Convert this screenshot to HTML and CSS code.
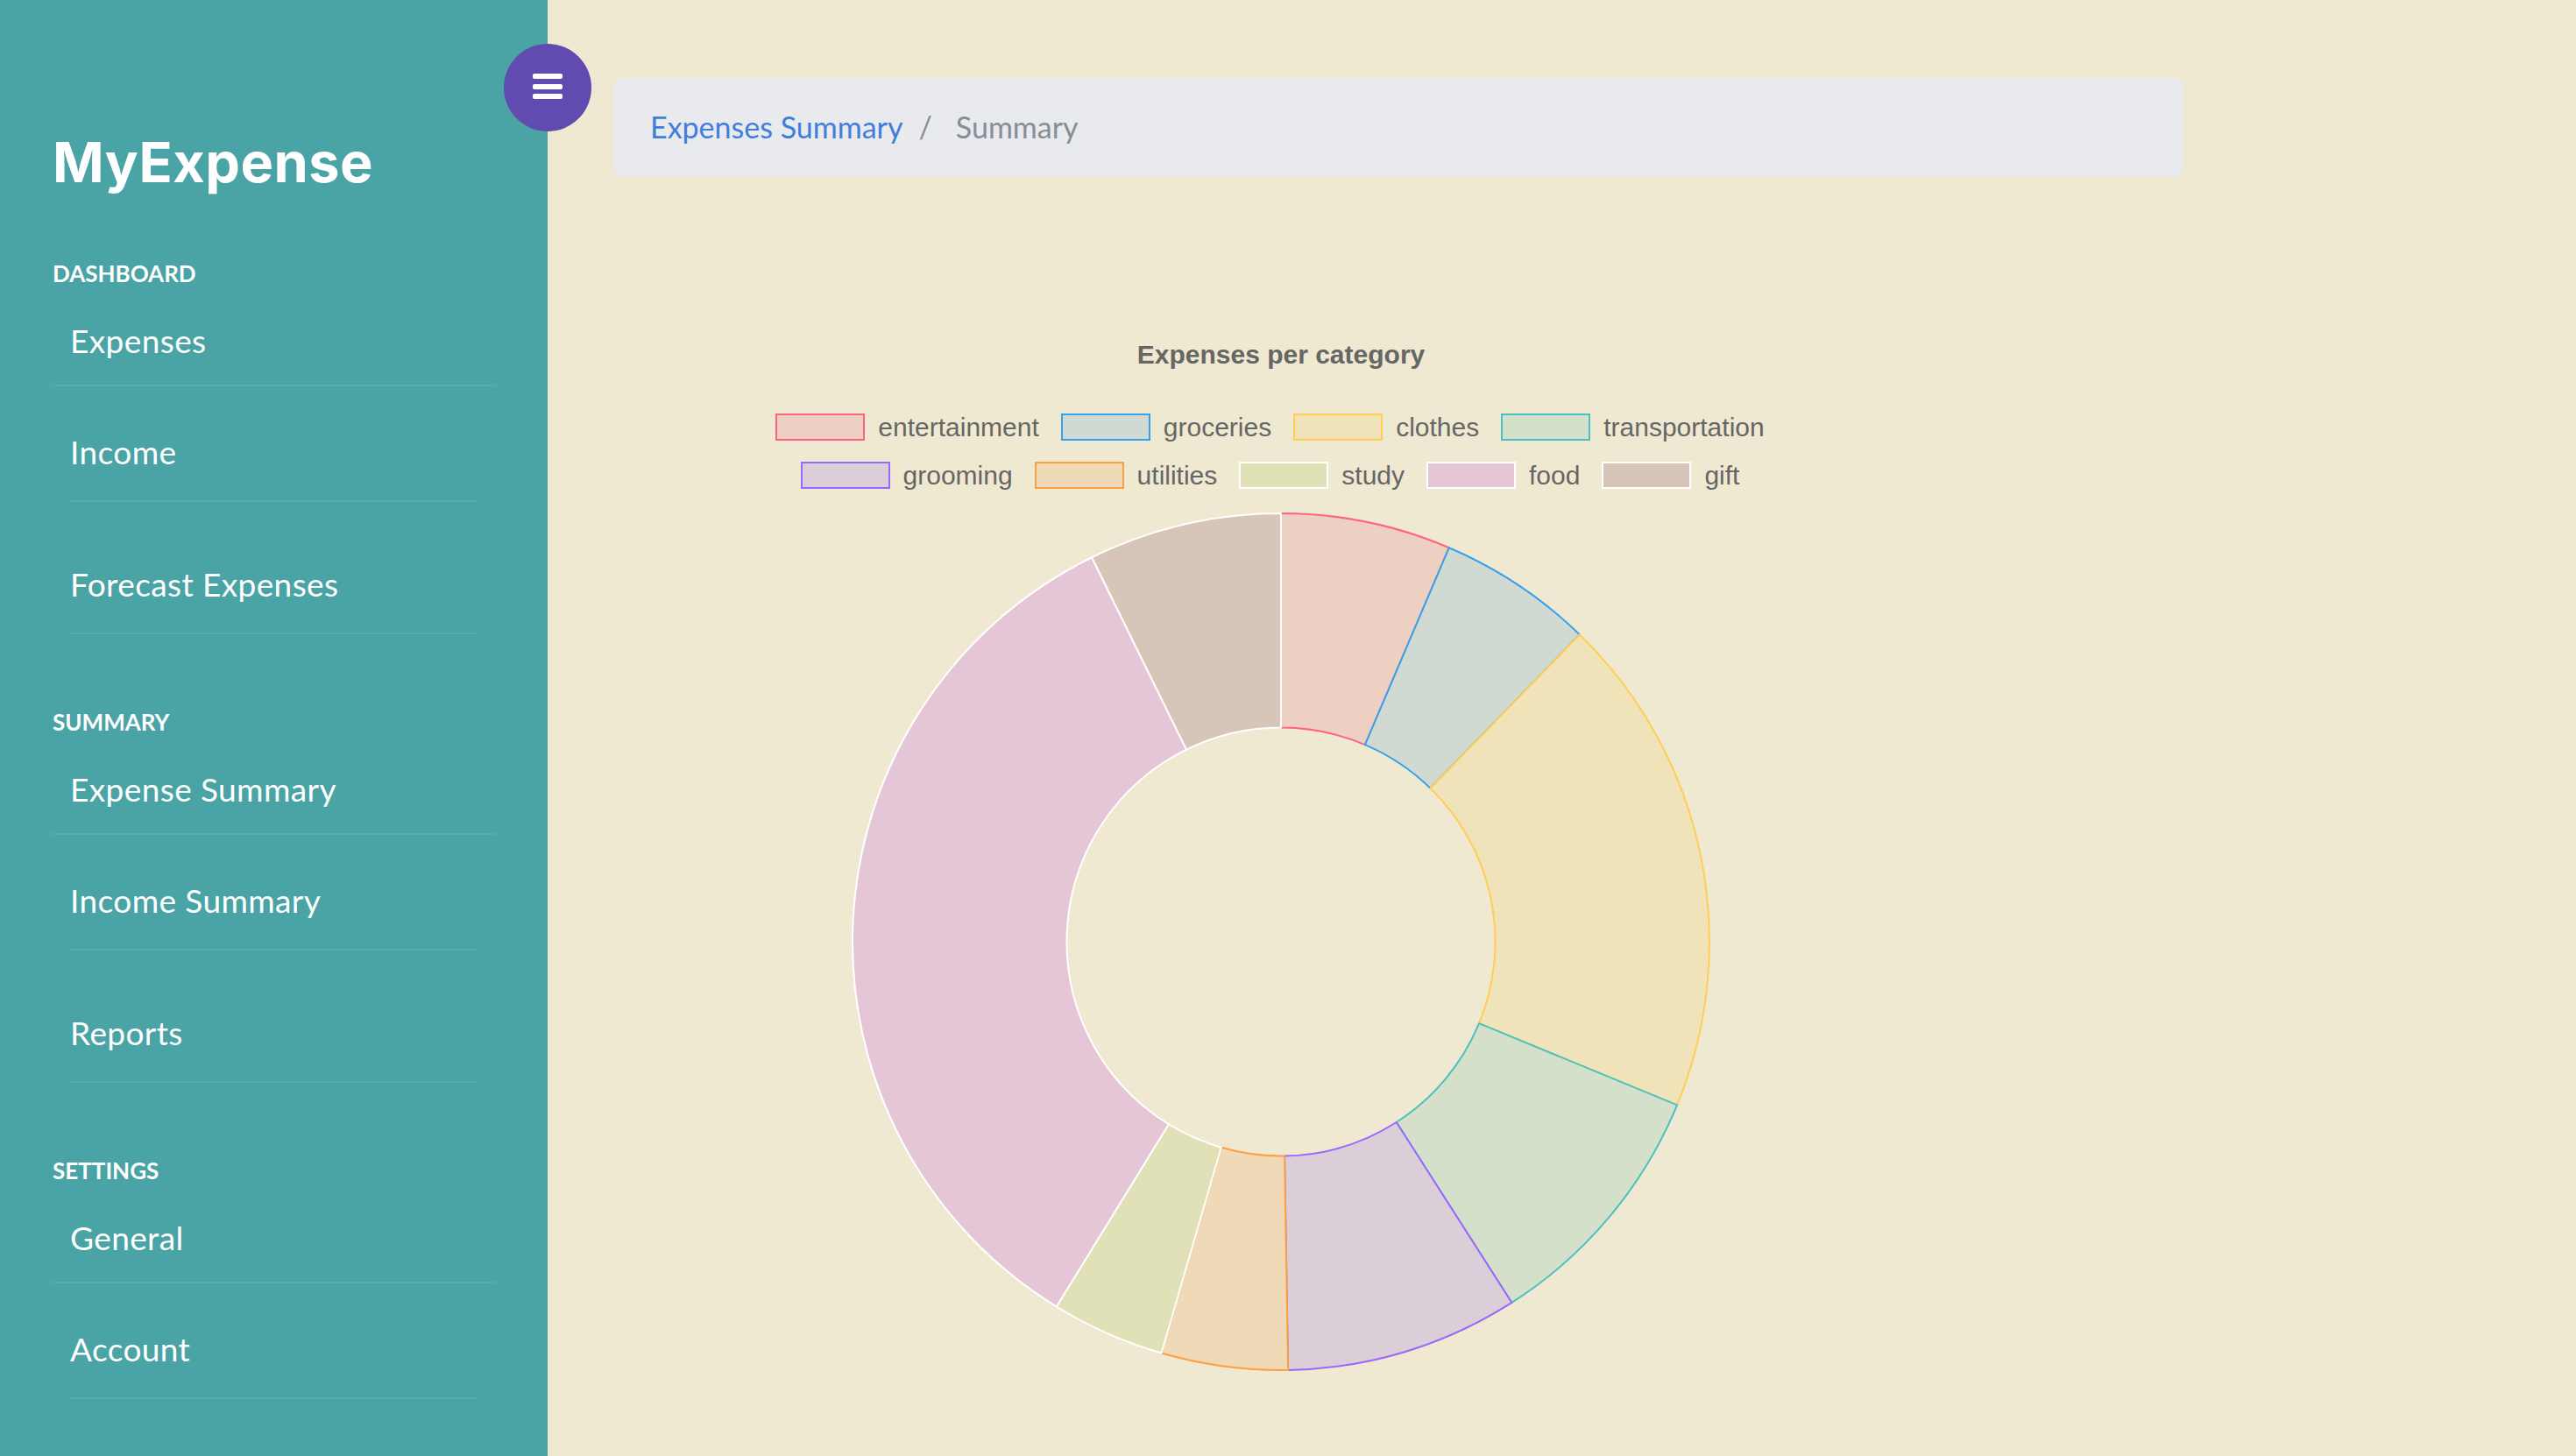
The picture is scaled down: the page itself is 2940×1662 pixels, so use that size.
FILE: index.html
```html
<!DOCTYPE html>
<html lang="en">
<head>
<meta charset="utf-8">
<title>MyExpense - Expenses Summary</title>
<link rel="stylesheet" href="styles.css">
</head>
<body>
<aside class="sidebar">
  <h1 class="brand">MyExpense</h1>
  <nav>
    <h6 class="section-title">Dashboard</h6>
    <ul class="nav-list">
      <li class="nav-item nav-item--lead"><a href="#">Expenses</a></li>
      <li class="nav-item nav-item--second"><a href="#">Income</a></li>
      <li class="nav-item nav-item--third"><a href="#">Forecast Expenses</a></li>
    </ul>
    <h6 class="section-title section-title--spaced">Summary</h6>
    <ul class="nav-list">
      <li class="nav-item nav-item--lead"><a href="#">Expense Summary</a></li>
      <li class="nav-item nav-item--second"><a href="#">Income Summary</a></li>
      <li class="nav-item nav-item--third"><a href="#">Reports</a></li>
    </ul>
    <h6 class="section-title section-title--spaced">Settings</h6>
    <ul class="nav-list">
      <li class="nav-item nav-item--lead"><a href="#">General</a></li>
      <li class="nav-item nav-item--second"><a href="#">Account</a></li>
    </ul>
  </nav>
</aside>
<main class="main">
  <button class="menu-toggle" type="button" aria-label="Toggle menu">
    <svg width="34" height="30" viewBox="0 0 34 30" aria-hidden="true">
      <rect x="0" y="0" width="34" height="6" rx="2" fill="#fff"/>
      <rect x="0" y="12" width="34" height="6" rx="2" fill="#fff"/>
      <rect x="0" y="23" width="34" height="6" rx="2" fill="#fff"/>
    </svg>
  </button>
  <ol class="breadcrumb">
    <li class="breadcrumb-item"><a href="#">Expenses Summary</a></li>
    <li class="breadcrumb-sep">/</li>
    <li class="breadcrumb-item breadcrumb-item--active">Summary</li>
  </ol>
  <section class="chart">
    <h2 class="chart-title">Expenses per category</h2>
    <div class="legend">
      <div class="legend-row">
        <span class="legend-item"><span class="swatch swatch--ent"></span>entertainment</span>
        <span class="legend-item"><span class="swatch swatch--groc"></span>groceries</span>
        <span class="legend-item"><span class="swatch swatch--clothes"></span>clothes</span>
        <span class="legend-item"><span class="swatch swatch--transp"></span>transportation</span>
      </div>
      <div class="legend-row">
        <span class="legend-item"><span class="swatch swatch--groom"></span>grooming</span>
        <span class="legend-item"><span class="swatch swatch--util"></span>utilities</span>
        <span class="legend-item"><span class="swatch swatch--study"></span>study</span>
        <span class="legend-item"><span class="swatch swatch--food"></span>food</span>
        <span class="legend-item"><span class="swatch swatch--gift"></span>gift</span>
      </div>
    </div>
    <svg class="donut" width="1000" height="1000" viewBox="0 0 1000 1000" aria-label="Expenses per category doughnut chart">
      <g stroke-width="2" stroke-linejoin="round">
        <path fill="#edd0c2" stroke="#ff6384" d="M500 11 A489 489 0 0 1 691.85 50.21 L595.93 275.10 A244.5 244.5 0 0 0 500 255.5 Z"/>
        <path fill="#d0d9d2" stroke="#36a2eb" d="M691.85 50.21 A489 489 0 0 1 840.92 149.43 L670.46 324.72 A244.5 244.5 0 0 0 595.93 275.10 Z"/>
        <path fill="#f0e2b9" stroke="#ffce56" d="M840.92 149.43 A489 489 0 0 1 952.10 686.34 L726.05 593.17 A244.5 244.5 0 0 0 670.46 324.72 Z"/>
        <path fill="#d4e0ca" stroke="#4bc0c0" d="M952.10 686.34 A489 489 0 0 1 763.46 911.96 L631.73 705.98 A244.5 244.5 0 0 0 726.05 593.17 Z"/>
        <path fill="#dacfd8" stroke="#9966ff" d="M763.46 911.96 A489 489 0 0 1 508.11 988.93 L504.05 744.47 A244.5 244.5 0 0 0 631.73 705.98 Z"/>
        <path fill="#efd9b7" stroke="#ff9f40" d="M508.11 988.93 A489 489 0 0 1 363.57 969.58 L431.79 734.79 A244.5 244.5 0 0 0 504.05 744.47 Z"/>
        <path fill="#e0e1b6" stroke="#ffffff" d="M363.57 969.58 A489 489 0 0 1 243.77 916.50 L371.88 708.25 A244.5 244.5 0 0 0 431.79 734.79 Z"/>
        <path fill="#e4c6d6" stroke="#ffffff" d="M243.77 916.50 A489 489 0 0 1 284.10 61.24 L392.05 280.62 A244.5 244.5 0 0 0 371.88 708.25 Z"/>
        <path fill="#d8c5ba" stroke="#ffffff" d="M284.10 61.24 A489 489 0 0 1 500 11 L500 255.5 A244.5 244.5 0 0 0 392.05 280.62 Z"/>
      </g>
    </svg>
  </section>
</main>
</body>
</html>
```
FILE: styles.css
```css
html, body {
  margin: 0;
  padding: 0;
}

body {
  display: flex;
  min-height: 100vh;
  background: #efe9d1;
  font-family: Lato, "Liberation Sans", sans-serif;
}

/* Sidebar */
.sidebar {
  flex: 0 0 625px;
  width: 625px;
  min-height: 100vh;
  box-sizing: border-box;
  padding: 148px 60px 0 60px;
  background: #4aa3a5;
  color: #fff;
}

.brand {
  margin: 0;
  font-family: Inter, "Open Sans", sans-serif;
  font-weight: 700;
  font-size: 63px;
  line-height: 74px;
  letter-spacing: 0.5px;
  color: #fff;
}

.section-title {
  margin: 74px 0 0 0;
  font-family: Lato, sans-serif;
  font-weight: 700;
  font-size: 26px;
  line-height: 32px;
  text-transform: uppercase;
  color: #fff;
}

.section-title--spaced {
  margin-top: 84px;
}

.nav-list {
  list-style: none;
  margin: 0;
  padding: 0;
}

.nav-item {
  font-size: 37px;
  line-height: 44px;
  font-weight: 400;
  letter-spacing: 0.4px;
}

.nav-item a {
  display: block;
  color: #fff;
  text-decoration: none;
}

.nav-item--lead {
  border-bottom: 2px solid #56acae;
}

.nav-item--lead a {
  padding: 39px 0 28px 20px;
}

.nav-item--second a,
.nav-item--third a {
  margin: 0 20px;
  padding: 53px 0 33px 0;
  border-bottom: 2px solid #56acae;
}

.nav-item--third a {
  padding-top: 72px;
}

/* Main */
.main {
  position: relative;
  flex: 1 1 auto;
  padding: 89px 0 0 75px;
}

.menu-toggle {
  position: absolute;
  left: -50px;
  top: 50px;
  width: 100px;
  height: 100px;
  border: 0;
  border-radius: 50%;
  background: #624bb0;
  display: flex;
  align-items: center;
  justify-content: center;
  padding: 0 0 3px 0;
  cursor: pointer;
}

.menu-toggle svg {
  display: block;
}

.breadcrumb {
  display: flex;
  align-items: center;
  box-sizing: border-box;
  width: 1792px;
  height: 113px;
  margin: 0;
  padding: 0 0 3px 42px;
  list-style: none;
  background: #e9eaee;
  border-radius: 12px;
  font-family: Lato, sans-serif;
  font-size: 34px;
}

.breadcrumb-item a {
  color: #3f7fdb;
  text-decoration: none;
}

.breadcrumb-sep {
  padding: 0 27px 0 18px;
  color: #868e96;
}

.breadcrumb-item--active {
  color: #868e96;
}

/* Chart */
.chart {
  width: 1524px;
  margin-top: 185px;
  font-family: "Liberation Sans", Arial, sans-serif;
  color: #666;
}

.chart-title {
  margin: 0;
  font-size: 30px;
  line-height: 36px;
  font-weight: 700;
  text-align: center;
  color: #666;
}

.legend {
  margin-top: 49px;
  display: flex;
  flex-direction: column;
  gap: 24px;
}

.legend-row {
  display: flex;
  justify-content: center;
}

.legend-item {
  display: flex;
  align-items: center;
  height: 31px;
  font-size: 30px;
  line-height: 31px;
  margin-right: 25px;
  color: #666;
}

.swatch {
  box-sizing: border-box;
  width: 102px;
  height: 31px;
  margin-right: 15px;
  border: 2px solid #fff;
}

.swatch--ent { background: #edd0c2; border-color: #ff6384; }
.swatch--groc { background: #d0d9d2; border-color: #36a2eb; }
.swatch--clothes { background: #f0e2b9; border-color: #ffce56; }
.swatch--transp { background: #d4e0ca; border-color: #4bc0c0; }
.swatch--groom { background: #dacfd8; border-color: #9966ff; }
.swatch--util { background: #efd9b7; border-color: #ff9f40; }
.swatch--study { background: #e0e1b6; border-color: #ffffff; }
.swatch--food { background: #e4c6d6; border-color: #ffffff; }
.swatch--gift { background: #d8c5ba; border-color: #ffffff; }

.donut {
  display: block;
  margin: 17px auto 0 auto;
}
```
